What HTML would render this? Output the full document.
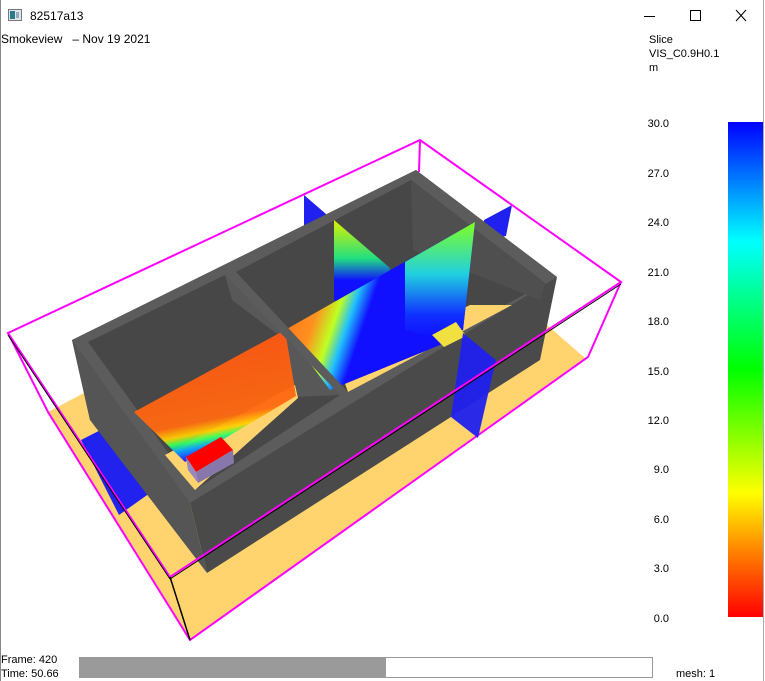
<!DOCTYPE html>
<html><head><meta charset="utf-8"><style>
html,body{margin:0;padding:0;width:765px;height:681px;overflow:hidden;background:#fff;font-family:"Liberation Sans",sans-serif;}
.t{position:absolute;font-size:12px;color:#000;white-space:nowrap;line-height:14px;}
.lbl{position:absolute;left:640px;width:29px;text-align:right;font-size:11px;line-height:12px;}
</style></head><body>
<div style="position:absolute;left:0;top:0;width:1px;height:681px;background:#888"></div>
<svg style="position:absolute;left:8px;top:9px" width="14" height="12"><rect x="0.5" y="0.5" width="13" height="11" fill="#dfe6ea" stroke="#777"/><rect x="2" y="2" width="5" height="8" fill="#2a7a8a"/><rect x="8" y="3" width="3" height="6" fill="#9ab"/></svg>
<div class="t" style="left:30px;top:9px;font-size:12px">82517a13</div>
<svg style="position:absolute;left:640px;top:6px" width="120" height="20">
<line x1="4" y1="10.5" x2="15" y2="10.5" stroke="#000"/>
<rect x="50.5" y="4.5" width="10" height="10" fill="none" stroke="#000"/>
<line x1="96" y1="4" x2="106" y2="15" stroke="#000"/><line x1="106" y1="4" x2="96" y2="15" stroke="#000"/>
</svg>
<div class="t" style="left:1px;top:32px">Smokeview &nbsp; – Nov 19 2021</div>
<div class="t" style="left:649px;top:33px;font-size:11px">Slice</div>
<div class="t" style="left:649px;top:47px;font-size:11px">VIS_C0.9H0.1</div>
<div class="t" style="left:649px;top:61px;font-size:11px">m</div>

<svg style="position:absolute;left:0;top:0" width="640" height="650">
<defs>
<linearGradient id="r1" x1="0" y1="0" x2="0.25" y2="1"><stop offset="0" stop-color="#ff5010"/><stop offset="0.75" stop-color="#ff6a10"/><stop offset="0.83" stop-color="#ffd000"/><stop offset="0.88" stop-color="#30ff60"/><stop offset="0.93" stop-color="#00a0ff"/><stop offset="1" stop-color="#2020ff"/></linearGradient>
<linearGradient id="r2" x1="0" y1="0" x2="1" y2="0.3"><stop offset="0" stop-color="#ff6010"/><stop offset="0.3" stop-color="#ff9020"/><stop offset="0.4" stop-color="#c0ff20"/><stop offset="0.47" stop-color="#20c0ff"/><stop offset="0.55" stop-color="#1010ff"/><stop offset="1" stop-color="#1010ff"/></linearGradient>
<linearGradient id="r3" x1="0" y1="0" x2="0" y2="1"><stop offset="0" stop-color="#e0f000"/><stop offset="0.35" stop-color="#20e080"/><stop offset="0.55" stop-color="#1010ff"/></linearGradient>
<linearGradient id="r4" x1="0" y1="0" x2="0" y2="1"><stop offset="0" stop-color="#80ff20"/><stop offset="0.45" stop-color="#20d0e0"/><stop offset="0.8" stop-color="#1030ff"/><stop offset="1" stop-color="#1010ff"/></linearGradient>
</defs>
<polygon points="48,412 420,215 585,358 190,640" fill="#ffd46e"/>
<polyline points="8,333 48,412 190,640 588,357 621,282" fill="none" stroke="#f0f" stroke-width="2"/>
<line x1="420" y1="140" x2="419" y2="172" stroke="#f0f" stroke-width="2"/>
<polygon points="304,195 326,214 326,240 304,225" fill="#2020f0"/>
<polygon points="484,220 512,205 506,236 484,240" fill="#2020f0"/>
<polygon points="81,440 126,417 150,493 119,515" fill="#2222ee"/>
<polygon points="72,340 416,170 557,277 540,360 207,573 190,503 90,420" fill="#4a4a4a"/>
<polygon points="72,340 190,503 207,573 90,420" fill="#555"/>
<polygon points="72,340 416,170 557,277 190,503" fill="#5c5c5c"/>
<!-- room 1 -->
<polygon points="88,342 225,275 340,395 195,490" fill="#474747"/>
<polygon points="225,275 232,300 285,340 295,397 340,395" fill="#585858"/>
<polygon points="165,455 295,385 298,398 195,490" fill="#ffd46e"/>
<polygon points="134,412 285,330 296,396 185,462" fill="url(#r1)" opacity="0.95"/>
<!-- room 2 -->
<polygon points="236,272 411,180 545,283 348,392" fill="#474747"/>
<polygon points="411,180 413,250 540,300 545,283" fill="#4f4f4f"/>
<polygon points="340,370 470,305 512,305 348,392" fill="#ffd46e"/>
<polygon points="334,220 390,268 380,330 334,300" fill="url(#r3)"/>
<polygon points="285,330 475,222 463,330 440,345 330,390 315,370" fill="url(#r2)"/>
<polygon points="405,262 475,222 463,330 440,338 405,330" fill="url(#r4)"/>
<polygon points="432,335 456,322 466,336 444,347" fill="#f0e040"/>
<polygon points="225,275 236,272 348,392 340,395" fill="#5c5c5c"/>
<polygon points="186,457 221,437 233,450 196,472" fill="#f00"/>
<polygon points="196,472 233,450 234,463 198,483" fill="#8877aa"/>
<polygon points="186,457 196,472 198,483 188,470" fill="#9988bb"/>
<polygon points="463,333 496,360 478,438 451,417" fill="#2020ee" opacity="0.95"/>
<polygon points="8,333 420,140 621,282 170,577" fill="none" stroke="#f0f" stroke-width="2"/>
<line x1="8" y1="335" x2="170" y2="579" stroke="#000" stroke-width="1"/>
<line x1="170" y1="579" x2="621" y2="284" stroke="#000" stroke-width="1"/>
<line x1="170" y1="577" x2="190" y2="640" stroke="#000" stroke-width="1.5"/>
</svg>

<div style="position:absolute;left:728px;top:122px;width:35px;height:495px;background:linear-gradient(to bottom,#0000ff 0%,#00ffff 24%,#00ff00 50%,#ffff00 75%,#ff8000 87%,#ff0000 100%)"></div>
<div style="position:absolute;left:763px;top:0;width:2px;height:681px;background:#fff;border-left:1px solid #aaa"></div>
<div class="lbl" style="top:118px">30.0</div>
<div class="lbl" style="top:168px">27.0</div>
<div class="lbl" style="top:217px">24.0</div>
<div class="lbl" style="top:267px">21.0</div>
<div class="lbl" style="top:316px">18.0</div>
<div class="lbl" style="top:366px">15.0</div>
<div class="lbl" style="top:415px">12.0</div>
<div class="lbl" style="top:464px">9.0</div>
<div class="lbl" style="top:514px">6.0</div>
<div class="lbl" style="top:563px">3.0</div>
<div class="lbl" style="top:613px">0.0</div>

<div class="t" style="left:1px;top:653px;font-size:11px">Frame: 420</div>
<div class="t" style="left:1px;top:667px;font-size:11px">Time: 50.66</div>
<div style="position:absolute;left:79px;top:657px;width:572px;height:19px;border:1px solid #999;background:#fff"></div>
<div style="position:absolute;left:80px;top:658px;width:306px;height:19px;background:#9a9a9a"></div>
<div class="t" style="left:676px;top:667px;font-size:11px">mesh: 1</div>
</body></html>
